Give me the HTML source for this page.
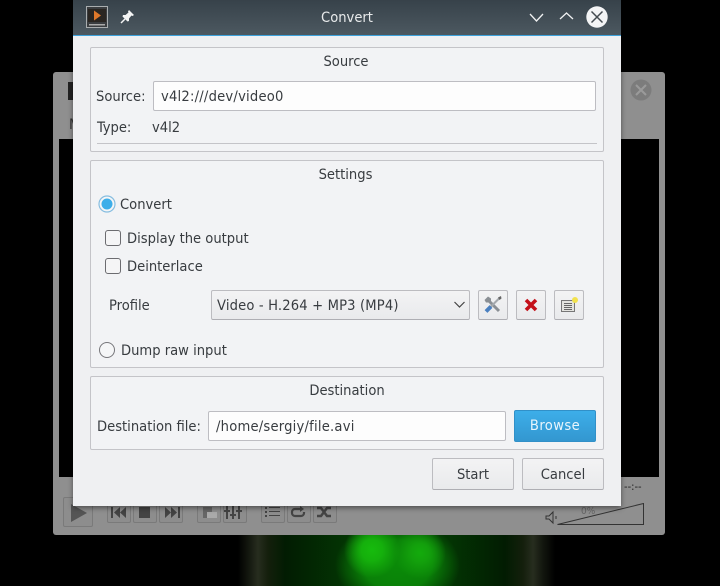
<!DOCTYPE html>
<html><head><meta charset="utf-8"><style>
html,body{margin:0;padding:0;width:720px;height:586px;overflow:hidden;background:#000}
body{position:relative;font-family:"DejaVu Sans",sans-serif;font-stretch:condensed;font-size:14.6px;color:#383c40}
div{position:absolute;box-sizing:border-box}
.t{white-space:nowrap;line-height:18px;height:18px;margin-top:1px}
.fr{border:1px solid #c4c4c8;border-radius:2px;background:#f2f3f5}
.in{background:#fdfdfd;border:1px solid #bdbdc2;border-radius:2px;padding-left:7px;line-height:29px;white-space:nowrap;letter-spacing:.22px}
.btn{background:linear-gradient(#f3f3f4,#e9eaec);border:1px solid #bcbcc0;border-bottom-color:#aeaeb3;border-radius:2px;text-align:center;line-height:31px}
.cb{width:16px;height:16px;border:1px solid #6c6c70;border-radius:3px;background:#f5f5f6}
.vb{background:#8d8d8d;border:1px solid #7a7a7a;border-radius:2px}
</style></head><body>
<div style="left:0;top:535px;width:720px;height:51px;overflow:hidden;background:linear-gradient(90deg,#000 238px,#12160e 248px,#272d1f 258px,#141f0c 268px,#021c02 285px,#033403 345px,#033403 450px,#021c02 505px,#141f0c 523px,#272d1f 533px,#12160e 543px,#000 555px)">
<div style="left:335px;top:-15px;width:125px;height:90px;border-radius:50%;background:radial-gradient(closest-side,#0a8a08 0,#0a8008 55%,rgba(8,90,8,0) 100%)"></div>
<div style="left:344px;top:-13px;width:56px;height:56px;border-radius:50%;background:radial-gradient(closest-side,#16bb0d 0,#15b00c 38%,rgba(15,140,10,0) 100%)"></div>
<div style="left:394px;top:-8px;width:52px;height:52px;border-radius:50%;background:radial-gradient(closest-side,#13ab0c 0,#13a00c 35%,rgba(15,130,10,0) 100%)"></div>
</div>

<div style="left:53px;top:72px;width:612px;height:463px;background:#8f8f8f;border-radius:3px"></div>
<div style="left:59px;top:139px;width:600px;height:338px;background:#000"></div>
<div style="left:68px;top:82px;width:6px;height:18px;background:#222"></div>
<div class="t" style="left:69px;top:115px;color:#333">M</div>
<svg style="position:absolute;left:630px;top:79px" width="22" height="22"><circle cx="11" cy="11" r="10.500" fill="#7c7c7c"/><path d="M6 6L16 16M16 6L6 16" stroke="#9a9a9a" stroke-width="2"/></svg>
<div class="t" style="left:624px;top:477px;font-size:11px;color:#222">--:--</div>
<div class="vb" style="left:63px;top:497px;width:30px;height:30px"></div>
<svg style="position:absolute;left:70px;top:503px" width="18" height="20"><path d="M1 1L17 10L1 19Z" fill="#555"/></svg>
<div class="vb" style="left:107px;top:500px;width:24px;height:23px"></div>
<div class="vb" style="left:133px;top:500px;width:24px;height:23px"></div>
<div class="vb" style="left:159px;top:500px;width:24px;height:23px"></div>
<div class="vb" style="left:197px;top:500px;width:24px;height:23px"></div>
<div class="vb" style="left:223px;top:500px;width:24px;height:23px"></div>
<div class="vb" style="left:261px;top:500px;width:24px;height:23px"></div>
<div class="vb" style="left:287px;top:500px;width:24px;height:23px"></div>
<div class="vb" style="left:313px;top:500px;width:24px;height:23px"></div>
<svg style="position:absolute;left:107px;top:505px" width="232" height="16" fill="#444" stroke="none">
<path d="M4 2h2v11H4zM13 2L7 7.500L13 13zM19 2L13 7.500L19 13z"/>
<rect x="32" y="2" width="11" height="11"/>
<path d="M58 2L64 7.500L58 13zM64 2L70 7.500L64 13zM71 2h2v11h-2z"/>
<path d="M96 2h9v5h-5v6h-4z" fill="#666"/><path d="M100 7h10v6h-10z" fill="#aaa"/>
<path d="M119 1h2v13h-2zM125 1h2v13h-2zM131 1h2v13h-2zM117 5h6v2h-6zM123 9h6v2h-6zM129 5h6v2h-6z"/>
<path d="M158 2h2v2h-2zM158 6h2v2h-2zM158 10h2v2h-2zM162 2h11v1h-11zM162 6h11v1h-11zM162 10h11v1h-11z"/>
<path d="M195 4h-7a3 3 0 0 0-3 3v1a3 3 0 0 0 3 3h6a3 3 0 0 0 3-3v-1" fill="none" stroke="#444" stroke-width="2.200"/><path d="M193 1l4 3-4 3z" fill="#444"/>
<path d="M210 3h4l6 8h4M210 11h4l6-8h4" fill="none" stroke="#444" stroke-width="2.500"/>
</svg>
<svg style="position:absolute;left:543px;top:503px" width="104" height="24" fill="none" stroke="#333"><path d="M3 13h3l4-4v11l-4-4H3zM13 13v3" stroke-width="1"/><path d="M14.500 21.500L100.500 0.500V21.500H14.500Z" stroke-width="1"/></svg>
<div class="t" style="left:581px;top:502px;font-size:10px;color:#666">0%</div>

<div style="left:73px;top:0;width:548px;height:506px;background:#eff0f2;box-shadow:0 2px 5px rgba(0,0,0,.45)"></div>
<div style="left:73px;top:0;width:548px;height:35px;background:linear-gradient(#37424a,#4c5860)"></div>
<div style="left:73px;top:35px;width:548px;height:1px;background:#3da2dc"></div>
<svg style="position:absolute;left:86px;top:6px" width="22" height="22"><rect x=".5" y=".5" width="21" height="21" fill="#3a3d40" stroke="#a9adaf"/><rect x="2" y="3" width="18" height="13" fill="#2a2622"/><path d="M8 4.500L15 9.500L8 14.500Z" fill="#e0782a"/><rect x="3" y="18" width="16" height="1.500" fill="#aaa"/></svg>
<svg style="position:absolute;left:120px;top:9px" width="15" height="15"><path d="M9 1L14 6L12.500 7L11.500 6.500L9 9.500L9 12L7.500 12.500L2.500 7.500L3 6L5.500 6L8.500 3.500L8 2.500Z" fill="#f4f5f5"/><path d="M5 10L1 14" stroke="#f4f5f5" stroke-width="1.500"/></svg>
<div class="t" style="left:73px;top:8px;width:548px;text-align:center;color:#e8eaeb">Convert</div>
<svg style="position:absolute;left:528px;top:10px" width="18" height="14" fill="none" stroke="#f0f1f2" stroke-width="1.300"><path d="M2 4L8.500 11L15 4"/></svg>
<svg style="position:absolute;left:558px;top:9px" width="18" height="14" fill="none" stroke="#f0f1f2" stroke-width="1.300"><path d="M2 10L8.500 4L15 10"/></svg>
<svg style="position:absolute;left:586px;top:6px" width="22" height="22"><circle cx="11" cy="11" r="10.700" fill="#f3f4f5"/><path d="M5.500 5.500L16.500 16.500M16.500 5.500L5.500 16.500" stroke="#444b50" stroke-width="1.500"/></svg>

<div class="fr" style="left:90px;top:47px;width:514px;height:105px"></div>
<div class="t" style="left:90px;top:52px;width:512px;text-align:center">Source</div>
<div class="t" style="left:96px;top:87px">Source:</div>
<div class="in" style="left:153px;top:81px;width:443px;height:30px">v4l2:///dev/video0</div>
<div class="t" style="left:97px;top:118px">Type:</div>
<div class="t" style="left:152px;top:118px">v4l2</div>
<div style="left:97px;top:143px;width:500px;height:1px;background:#c4c4c8"></div>

<div class="fr" style="left:90px;top:160px;width:514px;height:208px"></div>
<div class="t" style="left:90px;top:165px;width:511px;text-align:center">Settings</div>
<svg style="position:absolute;left:98px;top:195px" width="18" height="18"><circle cx="9" cy="9" r="8" fill="#f5f6f7" stroke="#86bde0" stroke-width="1.200"/><circle cx="9" cy="9" r="5.500" fill="#3daee9"/></svg>
<div class="t" style="left:120px;top:195px">Convert</div>
<div class="cb" style="left:105px;top:230px"></div>
<div class="t" style="left:127px;top:229px">Display the output</div>
<div class="cb" style="left:105px;top:258px"></div>
<div class="t" style="left:127px;top:257px">Deinterlace</div>
<div class="t" style="left:109px;top:296px">Profile</div>
<div class="btn" style="left:211px;top:290px;width:259px;height:30px;text-align:left;padding-left:5px;line-height:29px;letter-spacing:.16px">Video - H.264 + MP3 (MP4)</div>
<svg style="position:absolute;left:453px;top:300px" width="14" height="10" fill="none" stroke="#444" stroke-width="1.200"><path d="M1.500 2L6.500 7L11.500 2"/></svg>
<div class="btn" style="left:478px;top:290px;width:30px;height:30px"></div>
<svg style="position:absolute;left:483px;top:295px" width="20" height="20"><path d="M4 4L16 16" stroke="#8a8f94" stroke-width="3"/><path d="M1.500 5L5 1.500L8 3.500L8 6L5.500 7.500L3 7.500Z" fill="#8a8f94"/><path d="M16.500 3L7 12.500" stroke="#a5a9ad" stroke-width="2"/><path d="M8 11.500L3 16.500" stroke="#4a80c0" stroke-width="4"/><path d="M15 2.500L18 1L18.500 3.500L16.500 5Z" fill="#666"/></svg>
<div class="btn" style="left:516px;top:290px;width:30px;height:30px"></div>
<svg style="position:absolute;left:524px;top:298px" width="14" height="14"><path d="M2 2L12 12M12 2L2 12" stroke="#c4101a" stroke-width="3.600"/></svg>
<div class="btn" style="left:554px;top:290px;width:30px;height:30px"></div>
<svg style="position:absolute;left:560px;top:296px" width="20" height="18"><rect x="1.500" y="4.500" width="13" height="11" fill="#e4e4e0" stroke="#777"/><path d="M4 7.500h8M4 9.500h8M4 11.500h8M4 13.500h8" stroke="#666"/><circle cx="15" cy="4" r="3" fill="#f2e24e"/></svg>
<svg style="position:absolute;left:98px;top:341px" width="18" height="18"><circle cx="9" cy="9" r="7.500" fill="#f5f6f7" stroke="#77777b" stroke-width="1"/></svg>
<div class="t" style="left:121px;top:341px">Dump raw input</div>

<div class="fr" style="left:90px;top:376px;width:514px;height:74px"></div>
<div class="t" style="left:90px;top:381px;width:514px;text-align:center">Destination</div>
<div class="t" style="left:97px;top:417px">Destination file:</div>
<div class="in" style="left:208px;top:411px;width:298px;height:30px">/home/sergiy/file.avi</div>
<div class="btn" style="left:514px;top:410px;width:82px;height:32px;background:linear-gradient(#3daee9,#3397d0);border-color:#3190c8;color:#e8f5fc;line-height:30px;letter-spacing:.4px">Browse</div>

<div class="btn" style="left:432px;top:458px;width:82px;height:32px">Start</div>
<div class="btn" style="left:522px;top:458px;width:82px;height:32px">Cancel</div>
</body></html>
